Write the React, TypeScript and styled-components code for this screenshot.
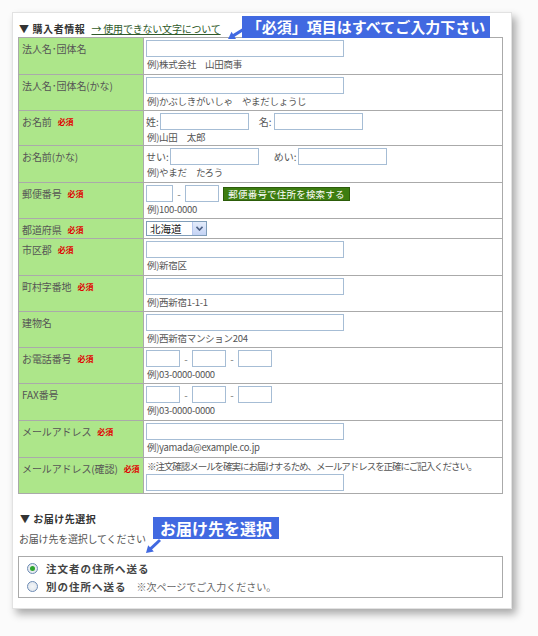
import React from 'react';
import styled, { createGlobalStyle } from 'styled-components';

const GlobalStyle = createGlobalStyle`
  html, body {
    margin: 0;
    padding: 0;
    background: #fbfbfb;
  }
  body {
    font-family: "Noto Sans CJK JP", "Noto Sans", sans-serif;
    font-size: 10px;
    color: #555;
  }
`;

const Page = styled.div`
  width: 538px;
  height: 636px;
  padding: 12px 0 0 12px;
  box-sizing: border-box;
  position: relative;
`;

const Panel = styled.div`
  width: 500px;
  height: 597px;
  box-sizing: border-box;
  background: #fff;
  border: 1px solid #e2e2e2;
  box-shadow: 4px 5px 8px rgba(0, 0, 0, 0.33);
  padding: 6px 10px 0 5px;
  position: relative;
`;

const SectionHead = styled.div`
  display: flex;
  align-items: center;
  gap: 6px;
  height: 18px;
  padding-left: 1px;
`;

const HeadTitle = styled.span`
  font-weight: bold;
  color: #333;
  font-size: 10px;
  letter-spacing: 0.6px;
`;

const HeadLink = styled.a`
  color: #2f5a2a;
  text-decoration: underline;
  font-size: 10px;
  letter-spacing: -0.2px;
`;

const FormTable = styled.div`
  display: grid;
  grid-template-columns: 125px 359px;
  border: 1px solid #aaa;
  border-top: none;
  box-sizing: border-box;
  width: 485px;
`;

const Label = styled.div<{ $h: number }>`
  height: ${(p) => p.$h}px;
  box-sizing: border-box;
  background: #ade68a;
  border-top: 1px solid #aaa;
  border-right: 1px solid #aaa;
  padding: 4px 0 0 3px;
  color: #555;
  font-size: 10px;
  line-height: 13px;
  letter-spacing: -0.1px;
  display: flex;
  align-items: flex-start;
  gap: 6px;
  white-space: nowrap;
`;

const Req = styled.span`
  color: #e00000;
  font-size: 8px;
  font-weight: bold;
  line-height: 13px;
`;

const Cell = styled.div<{ $h: number }>`
  height: ${(p) => p.$h}px;
  box-sizing: border-box;
  border-top: 1px solid #aaa;
  padding: 2px 0 0 2px;
  display: flex;
  flex-direction: column;
  gap: 1px;
`;

const Line = styled.div`
  display: flex;
  align-items: center;
  height: 17px;
`;

const TextInput = styled.div<{ $w: number }>`
  width: ${(p) => p.$w}px;
  height: 17px;
  box-sizing: border-box;
  border: 1px solid #a6bdd5;
  background: #fff;
  flex-shrink: 0;
`;

const Example = styled.div`
  font-size: 9.5px;
  line-height: 13px;
  letter-spacing: -0.3px;
  color: #555;
  padding-left: 1px;
  white-space: nowrap;
`;

const Small = styled.span<{ $ml?: number; $mr?: number }>`
  font-size: 10px;
  color: #555;
  margin-left: ${(p) => p.$ml || 0}px;
  margin-right: ${(p) => p.$mr || 0}px;
`;

const Dash = styled.span`
  display: inline-block;
  width: 12px;
  text-align: center;
  color: #777;
  font-size: 10px;
`;

const SearchButton = styled.div`
  margin-left: 4px;
  height: 14px;
  width: 127px;
  background: #3d7d10;
  color: #fff;
  font-size: 9.5px;
  line-height: 12px;
  text-align: center;
  letter-spacing: 0.2px;
  border: 1px solid #2c5c0a;
  box-sizing: border-box;
  white-space: nowrap;
  overflow: hidden;
`;

const Select = styled.div`
  width: 61px;
  height: 15px;
  box-sizing: border-box;
  border: 1px solid #7f9db9;
  display: flex;
  align-items: stretch;
  font-size: 10.5px;
  color: #222;
`;

const SelectText = styled.span`
  flex: 1;
  padding-left: 3px;
  line-height: 13px;
`;

const SelectArrow = styled.span`
  width: 13px;
  background: linear-gradient(#e4ecfb, #c4d3f4);
  border-left: 1px solid #b7c8ee;
  display: flex;
  align-items: center;
  justify-content: center;
`;

const Note = styled.div`
  font-size: 9.5px;
  line-height: 13px;
  letter-spacing: -1.05px;
  color: #555;
  padding-left: 1px;
  white-space: nowrap;
`;

const SubHead = styled.div`
  margin-top: 18px;
  padding-left: 2px;
  font-weight: bold;
  color: #333;
  font-size: 10px;
  line-height: 14px;
  letter-spacing: 0.5px;
`;

const SubText = styled.div`
  margin-top: 6px;
  padding-left: 1px;
  font-size: 10px;
  color: #555;
  line-height: 14px;
  letter-spacing: -0.2px;
`;

const ChoiceBox = styled.div`
  margin-top: 10px;
  width: 485px;
  height: 42px;
  box-sizing: border-box;
  border: 1px solid #aaa;
  padding: 4px 0 0 8px;
  display: flex;
  flex-direction: column;
  gap: 4px;
`;

const Choice = styled.div`
  display: flex;
  align-items: center;
  height: 14px;
  gap: 6px;
`;

const Radio = styled.span<{ $on?: boolean }>`
  width: 11px;
  height: 11px;
  border-radius: 50%;
  border: 1px solid #6d8bb5;
  box-sizing: border-box;
  background: radial-gradient(circle, #f4f6f8, #dde3ea);
  display: flex;
  align-items: center;
  justify-content: center;
  margin-right: 2px;
  &::after {
    content: '';
    width: 5px;
    height: 5px;
    border-radius: 50%;
    background: ${(p) => (p.$on ? '#2fa52f' : 'transparent')};
  }
`;

const ChoiceLabel = styled.span`
  font-weight: bold;
  color: #444;
  font-size: 10.5px;
  letter-spacing: 1px;
`;

const ChoiceNote = styled.span`
  color: #666;
  font-size: 10px;
  margin-left: 4px;
`;

const Callout = styled.div<{ $x: number; $y: number; $w: number; $size: number }>`
  position: absolute;
  left: ${(p) => p.$x}px;
  top: ${(p) => p.$y}px;
  width: ${(p) => p.$w}px;
  height: 22px;
  background: #4169e1;
  color: #fff;
  font-weight: bold;
  font-size: ${(p) => p.$size}px;
  line-height: 22px;
  text-align: center;
  white-space: nowrap;
  overflow: hidden;
`;

const ArrowSvg = styled.svg<{ $x: number; $y: number }>`
  position: absolute;
  left: ${(p) => p.$x}px;
  top: ${(p) => p.$y}px;
`;

const BlueArrow = ({ x, y, x1, y1, x2, y2 }: { x: number; y: number; x1: number; y1: number; x2: number; y2: number }) => {
  const ang = Math.atan2(y2 - y1, x2 - x1);
  const len = 8;
  const a1 = ang + Math.PI - 0.55;
  const a2 = ang + Math.PI + 0.55;
  const p1 = `${x2 + Math.cos(a1) * len},${y2 + Math.sin(a1) * len}`;
  const p2 = `${x2 + Math.cos(a2) * len},${y2 + Math.sin(a2) * len}`;
  return (
    <ArrowSvg $x={x} $y={y} width={24} height={20} viewBox="0 0 24 20">
      <line x1={x1} y1={y1} x2={x2 - Math.cos(ang) * 4} y2={y2 - Math.sin(ang) * 4} stroke="#4169e1" strokeWidth={3} />
      <polygon points={`${x2},${y2} ${p1} ${p2}`} fill="#4169e1" />
    </ArrowSvg>
  );
};

type Row = {
  label: string;
  req?: boolean;
  h: number;
  body: React.ReactNode;
};

const wide = (ex: string) => (
  <>
    <Line><TextInput $w={198} /></Line>
    <Example>{ex}</Example>
  </>
);

const phone = (
  <>
    <Line>
      <TextInput $w={34} />
      <Dash>-</Dash>
      <TextInput $w={34} />
      <Dash>-</Dash>
      <TextInput $w={34} />
    </Line>
    <Example>例)03-0000-0000</Example>
  </>
);

const rows: Row[] = [
  { label: '法人名･団体名', h: 37, body: wide('例)株式会社　山田商事') },
  { label: '法人名･団体名(かな)', h: 36, body: wide('例)かぶしきがいしゃ　やまだしょうじ') },
  {
    label: 'お名前',
    req: true,
    h: 35,
    body: (
      <>
        <Line>
          <Small $mr={1}>姓:</Small>
          <TextInput $w={89} />
          <Small $ml={10} $mr={2}>名:</Small>
          <TextInput $w={89} />
        </Line>
        <Example>例)山田　太郎</Example>
      </>
    ),
  },
  {
    label: 'お名前(かな)',
    h: 37,
    body: (
      <>
        <Line>
          <Small $mr={1}>せい:</Small>
          <TextInput $w={89} />
          <Small $ml={15} $mr={1}>めい:</Small>
          <TextInput $w={89} />
        </Line>
        <Example>例)やまだ　たろう</Example>
      </>
    ),
  },
  {
    label: '郵便番号',
    req: true,
    h: 36,
    body: (
      <>
        <Line>
          <TextInput $w={27} />
          <Dash>-</Dash>
          <TextInput $w={34} />
          <SearchButton>郵便番号で住所を検索する</SearchButton>
        </Line>
        <Example>例)100-0000</Example>
      </>
    ),
  },
  {
    label: '都道府県',
    req: true,
    h: 20,
    body: (
      <Select>
        <SelectText>北海道</SelectText>
        <SelectArrow>
          <svg width="7" height="5" viewBox="0 0 7 5">
            <path d="M0.5 0.8 L3.5 4 L6.5 0.8" stroke="#4d6185" strokeWidth="1.6" fill="none" />
          </svg>
        </SelectArrow>
      </Select>
    ),
  },
  { label: '市区郡', req: true, h: 37, body: wide('例)新宿区') },
  { label: '町村字番地', req: true, h: 36, body: wide('例)西新宿1-1-1') },
  { label: '建物名', h: 36, body: wide('例)西新宿マンション204') },
  { label: 'お電話番号', req: true, h: 36, body: phone },
  { label: 'FAX番号', h: 37, body: phone },
  { label: 'メールアドレス', req: true, h: 37, body: wide('例)yamada@example.co.jp') },
  {
    label: 'メールアドレス(確認)',
    req: true,
    h: 36,
    body: (
      <>
        <Note>※注文確認メールを確実にお届けするため、メールアドレスを正確にご記入ください。</Note>
        <Line><TextInput $w={198} /></Line>
      </>
    ),
  },
];

export default function App() {
  return (
    <>
      <GlobalStyle />
      <Page>
        <Panel>
          <SectionHead>
            <HeadTitle>▼ 購入者情報</HeadTitle>
            <HeadLink>→ 使用できない文字について</HeadLink>
          </SectionHead>
          <FormTable>
            {rows.map((r) => (
              <React.Fragment key={r.label}>
                <Label $h={r.h}>
                  <span>{r.label}</span>
                  {r.req && <Req>必須</Req>}
                </Label>
                <Cell $h={r.h}>{r.body}</Cell>
              </React.Fragment>
            ))}
          </FormTable>

          <SubHead>▼ お届け先選択</SubHead>
          <SubText>お届け先を選択してください</SubText>
          <ChoiceBox>
            <Choice>
              <Radio $on />
              <ChoiceLabel>注文者の住所へ送る</ChoiceLabel>
            </Choice>
            <Choice>
              <Radio />
              <ChoiceLabel>別の住所へ送る</ChoiceLabel>
              <ChoiceNote>※次ページでご入力ください。</ChoiceNote>
            </Choice>
          </ChoiceBox>
        </Panel>

        <Callout $x={242} $y={16} $w={248} $size={15}>「必須」項目はすべてご入力下さい</Callout>
        <BlueArrow x={224} y={24} x1={20} y1={5} x2={4} y2={15} />
        <Callout $x={153} $y={517} $w={126} $size={16}>お届け先を選択</Callout>
        <BlueArrow x={142} y={536} x1={18} y1={4} x2={4} y2={17} />
      </Page>
    </>
  );
}
